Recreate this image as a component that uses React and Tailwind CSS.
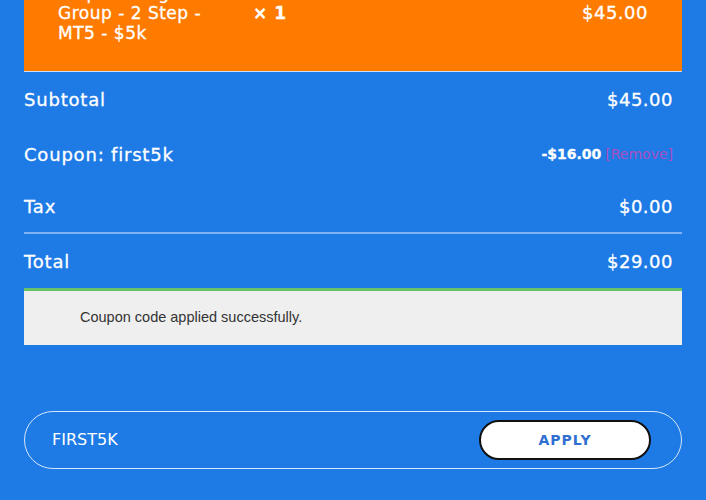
export default function App() {
  const font = { fontFamily: '"DejaVu Sans", "Noto Sans", sans-serif' };
  return (
    <div className="w-[706px] h-[500px] overflow-hidden bg-[#1e7be6] text-white" style={font}>
      <div className="px-[24px]">
        <div className="h-[72px] bg-[#ff7b00] border-b border-[#c9dcf5] flex text-[17px] leading-[20px] tracking-[0.5px] [-webkit-text-stroke:0.3px_white] relative">
          <div className="pl-[34px] w-[229px] -mt-[17px]">
            <div>Prop Trading</div>
            <div>Group - 2 Step -</div>
            <div>MT5 - $5k</div>
          </div>
          <div className="mt-[3px] font-bold">× 1</div>
          <div className="ml-auto pr-[34px] mt-[3px] text-[18px]">$45.00</div>
        </div>
        <div className="[-webkit-text-stroke:0.3px_white]">
          <div className="h-[55px] flex items-center justify-between pr-[9px]">
            <span className="text-[18px] tracking-[0.8px]">Subtotal</span>
            <span className="text-[18px] tracking-[0.5px]">$45.00</span>
          </div>
          <div className="h-[54px] flex items-center justify-between pr-[9px]">
            <span className="text-[18px] tracking-[0.8px]">Coupon: first5k</span>
            <span className="flex items-center gap-[4px]">
              <span className="text-[14px] font-bold">-$16.00</span>
              <span className="text-[14px] text-[#a84fc4] [-webkit-text-stroke:0px]">[Remove]</span>
            </span>
          </div>
          <div className="h-[53px] flex items-center justify-between pr-[9px] border-b-2 border-[#7fb2f0]">
            <span className="text-[18px] tracking-[0.8px]">Tax</span>
            <span className="text-[18px] tracking-[0.5px]">$0.00</span>
          </div>
          <div className="h-[54px] flex items-center justify-between pr-[9px]">
            <span className="text-[18px] tracking-[0.8px]">Total</span>
            <span className="text-[18px] tracking-[0.5px]">$29.00</span>
          </div>
        </div>
        <div className="h-[57px] bg-[#efefef] border-t-[3px] border-[#68c26a] flex items-center pl-[56px] text-[14.5px] text-[#333]" style={{ fontFamily: '"Liberation Sans", Arial, sans-serif' }}>
          Coupon code applied successfully.
        </div>
        <div className="mt-[66px] h-[58px] rounded-full border border-[#d6e6fb] flex items-center pl-[27px] pr-[30px]">
          <span className="text-[16px]">FIRST5K</span>
          <button className="ml-auto w-[172px] h-[40px] rounded-full bg-white border-2 border-[#111] text-[#2f6fd2] text-[14px] font-bold tracking-[1px]">
            APPLY
          </button>
        </div>
      </div>
    </div>
  );
}
